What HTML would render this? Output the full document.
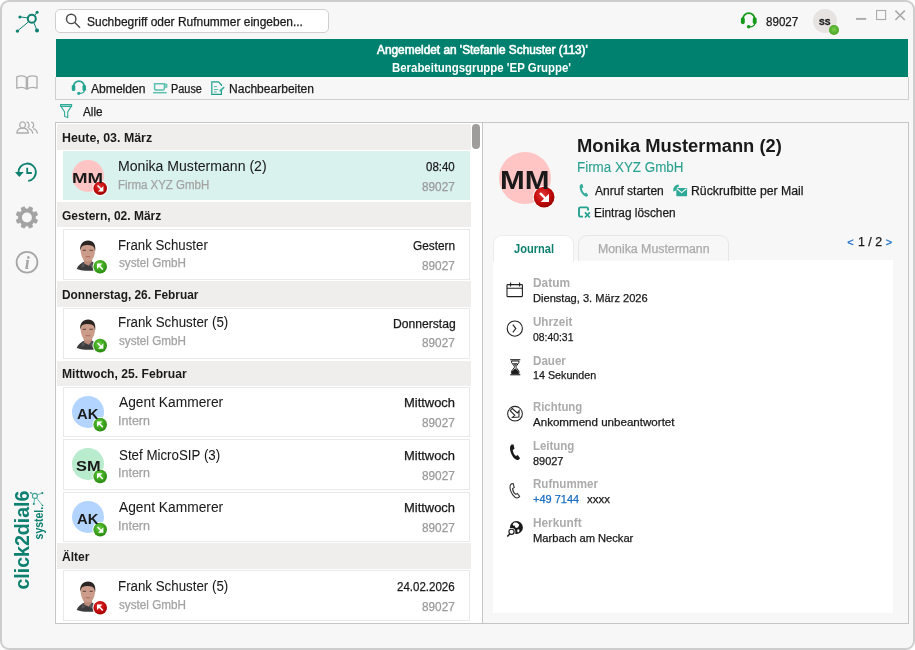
<!DOCTYPE html>
<html lang="de"><head><meta charset="utf-8"><title>click2dial6</title>
<style>
html,body{margin:0;padding:0;background:#fff;}
body{width:915px;height:650px;overflow:hidden;position:relative;font-family:"Liberation Sans", sans-serif;}
.t{position:absolute;white-space:pre;line-height:1.2;font-family:"Liberation Sans", sans-serif;}
.a{position:absolute;}
#root{position:absolute;left:0;top:0;width:915px;height:650px;will-change:transform;}

#win{position:absolute;left:0;top:0;width:911px;height:646px;border:2px solid #cdcdcd;border-radius:9px;background:#f7f7f7;}
.hd{position:absolute;left:57px;width:414px;height:25px;background:#f0eeed;}
.it{position:absolute;left:63px;width:405px;height:48px;background:#fff;border:1px solid #e9e9e9;}
.it.sel{background:#d9f2ee;border-color:#d9f2ee;}
.av{position:absolute;border-radius:50%;}
svg{position:absolute;overflow:visible;}

</style></head><body><div id="root">

<div id="win"></div>
<svg width="0" height="0" style="left:0;top:0"><defs>
<radialGradient id="gred" cx="42%" cy="38%" r="62%"><stop offset="0" stop-color="#e23a3a"/><stop offset="0.55" stop-color="#c90f0f"/><stop offset="1" stop-color="#9c0202"/></radialGradient>
<radialGradient id="ggreen" cx="42%" cy="38%" r="62%"><stop offset="0" stop-color="#6fd046"/><stop offset="0.55" stop-color="#3fa820"/><stop offset="1" stop-color="#2c8a12"/></radialGradient>
</defs></svg>
<div class="a" style="left:54.5px;top:9px;width:272.5px;height:21.5px;border:1px solid #cfcfcf;border-radius:5px;background:#fff"></div>
<div class="a" style="left:55px;top:77px;width:852px;height:22px;border:1px solid #cfcfcf;border-top:none;background:#f7f7f7"></div>
<div class="a" style="left:56px;top:39px;width:852px;height:38px;background:#00806f"></div>
<div class="a" style="left:55px;top:122px;width:426px;height:500px;border:1px solid #c6c6c6;background:#fff"></div>
<div class="a" style="left:472px;top:124px;width:8px;height:25px;border-radius:4px;background:#9e9d9b"></div>
<div class="a" style="left:482px;top:122px;width:425px;height:500px;border:1px solid #c6c6c6;background:#f7f7f7"></div>
<div class="a" style="left:493px;top:260px;width:400px;height:353px;background:#fff"></div>
<div class="a" style="left:493px;top:235px;width:79px;height:26px;border:1px solid #ececec;border-bottom:none;border-radius:9px 9px 0 0;background:#fff"></div>
<div class="a" style="left:578px;top:235px;width:149px;height:25px;border:1px solid #e6e6e6;border-bottom:none;border-radius:9px 9px 0 0;background:#f7f7f7"></div>
<div class="av" style="left:813px;top:8.8px;width:23.8px;height:23.8px;background:#e6e3e1"></div>
<div class="av" style="left:829px;top:24.75px;width:10.1px;height:10.1px;background:radial-gradient(circle at 50% 45%,#7ccc4e 0%,#55b02e 50%,#3d9a1e 100%)"></div>
<div class="hd" style="top:124.00px;height:26.00px"></div>
<div class="it sel" style="top:151.00px;height:47.00px"></div>
<div class="hd" style="top:202.00px;height:25.00px"></div>
<div class="it" style="top:229.00px;height:49.00px"></div>
<div class="hd" style="top:281.00px;height:26.00px"></div>
<div class="it" style="top:308.00px;height:49.00px"></div>
<div class="hd" style="top:361.00px;height:25.00px"></div>
<div class="it" style="top:387.00px;height:48.00px"></div>
<div class="it" style="top:439.00px;height:49.00px"></div>
<div class="it" style="top:492.00px;height:48.00px"></div>
<div class="hd" style="top:543.00px;height:26.00px"></div>
<div class="it" style="top:570.00px;height:49.00px"></div>
<div class="av" style="left:72.15px;top:160.10px;width:31.80px;height:31.80px;background:#ffc5c5"></div>
<svg style="left:91px;top:179px" width="18" height="18" viewBox="91 179 18 18">
<g transform="translate(100.20,188.20)"><circle r="7.70" fill="#fff"/><circle r="6.80" fill="url(#gred)"/>
<g transform="rotate(0) scale(0.971)" fill="#fff" stroke="none"><path d="M-3.3 -2.2 L-2.2 -3.3 L1.9 0.8 L0.8 1.9Z"/><path d="M3.3 3.3 H-2.3 L3.3 -2.3Z"/></g></g></svg>
<svg style="left:75px;top:240px" width="26" height="35" viewBox="75 240 26 35"><g transform="translate(87.70,240.20) scale(1,0.97)">
<path d="M-11 29.6 C-9.6 26 -7 24.4 -4.2 22.6 L4.6 22.2 C6.8 23.4 7.8 24.6 8 31 C2 32 -6 31.6 -11 29.6Z" fill="#3b3b3d"/>
<path d="M-4.4 18 H4.4 V22.4 L1 26.4 L-3.4 24.4Z" fill="#b98a78"/>
<path d="M-5 22.6 L-2.4 26.6 L-6.4 28.4 Z M4.6 22.2 L1.2 26.4 L5.4 28.6Z" fill="#55555a"/>
<path d="M-7.2 9 C-7.4 4 -4 1.6 0.2 1.6 C4.6 1.6 7.6 4.4 7.4 9.4 C7.4 14 6.4 17.6 4.2 20.2 C2.6 22.2 -1.6 22.6 -3.6 20.6 C-6 18.2 -7 14 -7.2 9Z" fill="#cc9c8a"/>
<path d="M-7.3 11 C-8.4 4 -4.6 0.2 0.4 0.2 C5.4 0.2 8.6 4 7.4 11.4 C7 8 6 6.4 4.4 5.6 C1.6 4.6 -2.4 4.8 -4.6 5.6 C-6.4 6.6 -7 8.4 -7.3 11Z" fill="#2b2523"/>
<path d="M-5 10.4 H-1.6 M1.8 10.4 H5.2" stroke="#5a3f38" stroke-width="1" fill="none"/>
<path d="M-2 17 H2.4" stroke="#a8655c" stroke-width="0.9" fill="none"/>
</g></svg>
<svg style="left:91px;top:258px" width="18" height="18" viewBox="91 258 18 18">
<g transform="translate(100.20,266.80)"><circle r="7.70" fill="#fff"/><circle r="6.80" fill="url(#ggreen)"/>
<g transform="rotate(180) scale(0.971)" fill="#fff" stroke="none"><path d="M-3.3 -2.2 L-2.2 -3.3 L1.9 0.8 L0.8 1.9Z"/><path d="M3.3 3.3 H-2.3 L3.3 -2.3Z"/></g></g></svg>
<svg style="left:75px;top:319px" width="26" height="35" viewBox="75 319 26 35"><g transform="translate(87.70,319.20) scale(1,0.97)">
<path d="M-11 29.6 C-9.6 26 -7 24.4 -4.2 22.6 L4.6 22.2 C6.8 23.4 7.8 24.6 8 31 C2 32 -6 31.6 -11 29.6Z" fill="#3b3b3d"/>
<path d="M-4.4 18 H4.4 V22.4 L1 26.4 L-3.4 24.4Z" fill="#b98a78"/>
<path d="M-5 22.6 L-2.4 26.6 L-6.4 28.4 Z M4.6 22.2 L1.2 26.4 L5.4 28.6Z" fill="#55555a"/>
<path d="M-7.2 9 C-7.4 4 -4 1.6 0.2 1.6 C4.6 1.6 7.6 4.4 7.4 9.4 C7.4 14 6.4 17.6 4.2 20.2 C2.6 22.2 -1.6 22.6 -3.6 20.6 C-6 18.2 -7 14 -7.2 9Z" fill="#cc9c8a"/>
<path d="M-7.3 11 C-8.4 4 -4.6 0.2 0.4 0.2 C5.4 0.2 8.6 4 7.4 11.4 C7 8 6 6.4 4.4 5.6 C1.6 4.6 -2.4 4.8 -4.6 5.6 C-6.4 6.6 -7 8.4 -7.3 11Z" fill="#2b2523"/>
<path d="M-5 10.4 H-1.6 M1.8 10.4 H5.2" stroke="#5a3f38" stroke-width="1" fill="none"/>
<path d="M-2 17 H2.4" stroke="#a8655c" stroke-width="0.9" fill="none"/>
</g></svg>
<svg style="left:91px;top:336px" width="18" height="19" viewBox="91 336 18 19">
<g transform="translate(100.20,345.60)"><circle r="7.70" fill="#fff"/><circle r="6.80" fill="url(#ggreen)"/>
<g transform="rotate(0) scale(0.971)" fill="#fff" stroke="none"><path d="M-3.3 -2.2 L-2.2 -3.3 L1.9 0.8 L0.8 1.9Z"/><path d="M3.3 3.3 H-2.3 L3.3 -2.3Z"/></g></g></svg>
<div class="av" style="left:72.15px;top:396.10px;width:31.80px;height:31.80px;background:#b3d4ff"></div>
<svg style="left:91px;top:415px" width="18" height="19" viewBox="91 415 18 19">
<g transform="translate(100.20,424.60)"><circle r="7.70" fill="#fff"/><circle r="6.80" fill="url(#ggreen)"/>
<g transform="rotate(180) scale(0.971)" fill="#fff" stroke="none"><path d="M-3.3 -2.2 L-2.2 -3.3 L1.9 0.8 L0.8 1.9Z"/><path d="M3.3 3.3 H-2.3 L3.3 -2.3Z"/></g></g></svg>
<div class="av" style="left:72.15px;top:448.10px;width:31.80px;height:31.80px;background:#b9ebcd"></div>
<svg style="left:91px;top:467px" width="18" height="19" viewBox="91 467 18 19">
<g transform="translate(100.20,476.40)"><circle r="7.70" fill="#fff"/><circle r="6.80" fill="url(#ggreen)"/>
<g transform="rotate(180) scale(0.971)" fill="#fff" stroke="none"><path d="M-3.3 -2.2 L-2.2 -3.3 L1.9 0.8 L0.8 1.9Z"/><path d="M3.3 3.3 H-2.3 L3.3 -2.3Z"/></g></g></svg>
<div class="av" style="left:72.15px;top:501.10px;width:31.80px;height:31.80px;background:#b3d4ff"></div>
<svg style="left:91px;top:520px" width="18" height="19" viewBox="91 520 18 19">
<g transform="translate(100.20,529.60)"><circle r="7.70" fill="#fff"/><circle r="6.80" fill="url(#ggreen)"/>
<g transform="rotate(0) scale(0.971)" fill="#fff" stroke="none"><path d="M-3.3 -2.2 L-2.2 -3.3 L1.9 0.8 L0.8 1.9Z"/><path d="M3.3 3.3 H-2.3 L3.3 -2.3Z"/></g></g></svg>
<svg style="left:75px;top:581px" width="26" height="35" viewBox="75 581 26 35"><g transform="translate(87.70,581.20) scale(1,0.97)">
<path d="M-11 29.6 C-9.6 26 -7 24.4 -4.2 22.6 L4.6 22.2 C6.8 23.4 7.8 24.6 8 31 C2 32 -6 31.6 -11 29.6Z" fill="#3b3b3d"/>
<path d="M-4.4 18 H4.4 V22.4 L1 26.4 L-3.4 24.4Z" fill="#b98a78"/>
<path d="M-5 22.6 L-2.4 26.6 L-6.4 28.4 Z M4.6 22.2 L1.2 26.4 L5.4 28.6Z" fill="#55555a"/>
<path d="M-7.2 9 C-7.4 4 -4 1.6 0.2 1.6 C4.6 1.6 7.6 4.4 7.4 9.4 C7.4 14 6.4 17.6 4.2 20.2 C2.6 22.2 -1.6 22.6 -3.6 20.6 C-6 18.2 -7 14 -7.2 9Z" fill="#cc9c8a"/>
<path d="M-7.3 11 C-8.4 4 -4.6 0.2 0.4 0.2 C5.4 0.2 8.6 4 7.4 11.4 C7 8 6 6.4 4.4 5.6 C1.6 4.6 -2.4 4.8 -4.6 5.6 C-6.4 6.6 -7 8.4 -7.3 11Z" fill="#2b2523"/>
<path d="M-5 10.4 H-1.6 M1.8 10.4 H5.2" stroke="#5a3f38" stroke-width="1" fill="none"/>
<path d="M-2 17 H2.4" stroke="#a8655c" stroke-width="0.9" fill="none"/>
</g></svg>
<svg style="left:91px;top:599px" width="18" height="18" viewBox="91 599 18 18">
<g transform="translate(100.20,607.80)"><circle r="7.70" fill="#fff"/><circle r="6.80" fill="url(#gred)"/>
<g transform="rotate(180) scale(0.971)" fill="#fff" stroke="none"><path d="M-3.3 -2.2 L-2.2 -3.3 L1.9 0.8 L0.8 1.9Z"/><path d="M3.3 3.3 H-2.3 L3.3 -2.3Z"/></g></g></svg>
<div class="av" style="left:498.8px;top:152.4px;width:51.8px;height:51.8px;background:#ffc5c5"></div>
<svg style="left:531px;top:184px" width="26" height="26" viewBox="531 184 26 26">
<g transform="translate(544.10,197.10)"><circle r="11.30" fill="#fff"/><circle r="10.40" fill="url(#gred)"/>
<g transform="rotate(0) scale(1.486)" fill="#fff" stroke="none"><path d="M-3.3 -2.2 L-2.2 -3.3 L1.9 0.8 L0.8 1.9Z"/><path d="M3.3 3.3 H-2.3 L3.3 -2.3Z"/></g></g></svg>

<!-- app logo -->
<svg style="left:14px;top:8px" width="28" height="28" viewBox="14 8 28 28" fill="none" stroke="#0e8070">
<circle cx="31.8" cy="18.7" r="4" stroke-width="2"/>
<path d="M34.8 15.4 L37 12.3 M27.6 17.9 L20 16.9 M28.3 22 L17.5 31 M33.8 22.6 L37 30.4" stroke-width="1"/>
<g fill="#0e8070" stroke="none"><circle cx="37.1" cy="12.2" r="1.5"/><circle cx="19.9" cy="16.9" r="1.5"/><circle cx="17.4" cy="31.1" r="1.7"/><circle cx="37" cy="30.5" r="2"/></g>
</svg>
<!-- search magnifier -->
<svg style="left:65px;top:13px" width="16" height="16" viewBox="0 0 16 16" fill="none" stroke="#4a4a4a" stroke-width="1.45"><circle cx="6.2" cy="5.9" r="4.7"/><path d="M9.6 9.3 L15 14.7"/></svg>
<!-- top headset (green) -->
<svg style="left:740px;top:12px" width="18" height="18" viewBox="740 12 18 18"><g transform="translate(740.9,12.6) scale(1.11)" fill="none" stroke="#14991a"><path d="M1.8 5.8 A5.3 5.3 0 0 1 12.4 5.8" stroke-width="1.7"/><rect x="0" y="4.1" width="3.5" height="6.3" rx="1.6" fill="#14991a" stroke="none"/><rect x="10.7" y="4.1" width="3.5" height="6.3" rx="1.6" fill="#14991a" stroke="none"/><path d="M12.6 9.6 C12.4 11.8 9.8 12.8 7.6 12.8" stroke-width="1.2"/><circle cx="7" cy="12.7" r="1.6" fill="#14991a" stroke="none"/></g></svg>
<!-- window controls -->
<svg style="left:855px;top:8px" width="52" height="14" viewBox="855 8 52 14" fill="none" stroke="#ababab"><path d="M856 18.9 H866.2" stroke-width="1.9"/><rect x="876.6" y="10.5" width="9" height="9" stroke-width="1.1"/><path d="M895.4 10.6 L904.8 20 M904.8 10.6 L895.4 20" stroke-width="1.7"/></svg>
<!-- toolbar: headset -->
<svg style="left:71px;top:80px" width="16" height="16" viewBox="71 80 16 16"><g transform="translate(71.8,80.6) scale(1.0)" fill="none" stroke="#27a593"><path d="M1.8 5.8 A5.3 5.3 0 0 1 12.4 5.8" stroke-width="1.7"/><rect x="0" y="4.1" width="3.5" height="6.3" rx="1.6" fill="#27a593" stroke="none"/><rect x="10.7" y="4.1" width="3.5" height="6.3" rx="1.6" fill="#27a593" stroke="none"/><path d="M12.6 9.6 C12.4 11.8 9.8 12.8 7.6 12.8" stroke-width="1.2"/><circle cx="7" cy="12.7" r="1.6" fill="#27a593" stroke="none"/></g></svg>
<!-- toolbar: cup -->
<svg style="left:153px;top:83px" width="15" height="11" viewBox="0 0 15 11" fill="none" stroke="#5cc0b0" stroke-width="1.5"><path d="M1.6 0.8 H11.4 V5.6 Q11.4 7 10 7 H3 Q1.6 7 1.6 5.6Z"/><path d="M11.4 1.6 H13.6 V4 H11.4"/><path d="M0 9.7 H13.6"/></svg>
<!-- toolbar: doc -->
<svg style="left:211px;top:81px" width="14" height="15" viewBox="0 0 14 15" fill="none" stroke="#1aa08c" stroke-width="1.2"><path d="M10.4 8.6 V13.4 H0.8 V0.8 H7.4 L10.4 3.8 V5"/><path d="M3 5.6 H6 M3 8.6 H7.2 M3 11 H5.8" stroke-width="1" stroke="#4db8a7"/><path d="M8.7 10.2 L13.2 6.1" stroke-width="1.8" stroke="#3fb3a1"/></svg>
<!-- funnel -->
<svg style="left:60px;top:104px" width="13" height="15" viewBox="60 104 13 15" fill="none" stroke="#2fab98" stroke-width="1.1" stroke-linejoin="miter"><path d="M60.6 104.6 H71.6 V106.4 H60.6Z"/><path d="M61 106.4 L64.6 111.9 V116.4 L67.7 117.5 V111.9 L71.2 106.4"/></svg>
<!-- sidebar: book -->
<svg style="left:15px;top:74px" width="24" height="17" viewBox="15 74 24 17" fill="none" stroke="#adadad" stroke-width="1.3" stroke-linejoin="round"><path d="M26.3 77.4 C24.4 75.6 20.2 75.2 16.8 76.8 V88.2 C20.2 87.2 24.4 87.4 26.3 89 Z"/><path d="M27.5 77.4 C29.4 75.6 33.6 75.2 37 76.8 V88.2 C33.6 87.2 29.4 87.4 27.5 89 Z"/></svg>
<!-- sidebar: people -->
<svg style="left:15px;top:120px" width="24" height="15" viewBox="15 120 24 15" fill="none" stroke="#adadad" stroke-width="1.3" stroke-linejoin="round"><path d="M22.6 121.9 a2.9 3.1 0 1 0 0.01 0Z"/><path d="M16.8 133 C17.2 129.6 19.4 128.2 22.6 128.2 C25.8 128.2 28 129.6 28.4 133 Z"/><path d="M26.6 122 A2.9 3.1 0 0 1 27.6 127.8 M28.6 128.6 C30.8 129.2 32.4 130.4 32.8 133.6"/><path d="M31.2 122 A2.9 3.1 0 0 1 32.2 127.8 M33.2 128.6 C35.4 129.2 37 130.4 37.4 133.6"/></svg>
<!-- sidebar: history -->
<svg style="left:14px;top:161px" width="26" height="24" viewBox="14 161 26 24" fill="none" stroke="#0e8070" stroke-width="1.9"><path d="M18.5 172.6 A8.7 8.7 0 1 1 28.2 180.9"/><path d="M15 172 L23.7 172 L19.3 176.9 Z" fill="#0e8070" stroke="none"/><path d="M27.2 167.8 V173 H31.8" stroke-width="1.8"/></svg>
<!-- sidebar: gear -->
<svg style="left:15px;top:206px" width="24" height="24" viewBox="-11.9 -11.45 24 24"><path transform="rotate(22.5) scale(0.98)" d="M-2.09 -8.34 L-1.75 -11.06 L1.75 -11.06 L2.09 -8.34 L4.42 -7.38 L6.58 -9.06 L9.06 -6.58 L7.38 -4.42 L8.34 -2.09 L11.06 -1.75 L11.06 1.75 L8.34 2.09 L7.38 4.42 L9.06 6.58 L6.58 9.06 L4.42 7.38 L2.09 8.34 L1.75 11.06 L-1.75 11.06 L-2.09 8.34 L-4.42 7.38 L-6.58 9.06 L-9.06 6.58 L-7.38 4.42 L-8.34 2.09 L-11.06 1.75 L-11.06 -1.75 L-8.34 -2.09 L-7.38 -4.42 L-9.06 -6.58 L-6.58 -9.06 L-4.42 -7.38Z" fill="#a3a3a3" stroke="#a3a3a3" stroke-width="0.8" stroke-linejoin="round"/><circle r="5" fill="#f7f7f7"/></svg>
<!-- sidebar: info -->
<svg style="left:15px;top:250px" width="24" height="24" viewBox="15 250 24 24" fill="none" stroke="#a6a6a6" stroke-width="1.8"><circle cx="27" cy="262.2" r="10.4"/><text x="27.3" y="268.6" font-family="Liberation Serif, serif" font-style="italic" font-weight="700" font-size="18" fill="#a6a6a6" stroke="none" text-anchor="middle">i</text></svg>
<!-- detail: phone (call start) -->
<svg style="left:578px;top:183px" width="12" height="16" viewBox="578 183 12 16"><path transform="translate(577.78,183.47) scale(0.9,0.875)" d="M3.4 0.8 L5.2 0.6 L6.2 4.6 L4.6 5.6 C4.8 8 6 10.2 7.8 11.4 L9.4 10.4 L11.6 13.4 L10.4 14.8 C9 15.6 6.6 14.6 4.6 11.6 C2.4 8.4 1.8 4.6 2.2 2.4 Z" fill="#36ae9b"/></svg>
<!-- detail: mail -->
<svg style="left:672px;top:183px" width="17" height="15" viewBox="672 183 17 15"><path d="M673.2 191.4 C673 187.4 675.4 184.6 678.4 184.4 L679.2 186.6 C677 187 676 188.6 676 190.6 Z" fill="#2fa997"/><rect x="676.3" y="187.9" width="10.8" height="8.4" rx="0.7" fill="#2fa997"/><path d="M677 188.8 L681.7 192.6 L686.4 188.8" fill="none" stroke="#f7f7f7" stroke-width="1.1"/></svg>
<!-- detail: delete entry -->
<svg style="left:577px;top:205px" width="15" height="14" viewBox="577 205 15 14" fill="none" stroke="#25a18f"><path d="M588 210.6 V208.8 Q588 207.4 586.6 207.4 H580.4 Q579 207.4 579 208.8 V215.2 Q579 216.6 580.4 216.6 H583" stroke-width="1.9"/><path d="M585 212.3 L589.8 217.5 M589.8 212.3 L585 217.5" stroke-width="1.7"/></svg>
<!-- field: calendar -->
<svg style="left:506px;top:282px" width="18" height="16" viewBox="0 0 18 16" fill="none" stroke="#222" stroke-width="1.1"><rect x="1" y="2.6" width="15.4" height="12" rx="0.6"/><path d="M1 6.2 H16.4 M4.6 0.4 V4.4 M13.6 0.4 V4.4"/></svg>
<!-- field: clock -->
<svg style="left:506px;top:320px" width="18" height="18" viewBox="0 0 18 18" fill="none" stroke="#222" stroke-width="1.1"><circle cx="8.8" cy="8.6" r="7.6"/><path d="M6.8 4.6 L9.8 8.6 L6.8 12.4"/></svg>
<!-- field: hourglass -->
<svg style="left:509px;top:358px" width="13" height="18" viewBox="509 358 13 18" fill="#1a1a1a"><rect x="510.2" y="359.2" width="10.1" height="1.1"/><rect x="510.2" y="374.2" width="10.1" height="1.1"/><path d="M511.6 361 H518.9 V362.6 L516.1 366.4 V367.4 L518.9 371.2 V373.6 H511.6 V371.2 L514.4 367.4 V366.4 L511.6 362.6 Z" fill="none" stroke="#1a1a1a" stroke-width="1"/><path d="M512.6 363 H517.9 L515.25 366.4Z" fill="#555"/><path d="M515.25 368.2 L518.6 371.6 V373.6 H511.9 V371.6Z"/></svg>
<!-- field: direction -->
<svg style="left:506px;top:405px" width="18" height="18" viewBox="506 405 18 18" fill="none" stroke="#222" stroke-width="1.05" stroke-linejoin="miter"><circle cx="515" cy="413.7" r="7.35"/><path d="M512.2 408.5 L517.3 413 L519.1 410.6 L518.9 417.1 L512.4 417.4 L514.8 415.3 L510.2 410.7 Z"/></svg>
<!-- field: phone filled -->
<svg style="left:508px;top:443.6px" width="13" height="18" viewBox="0 0 13.6 18.8"><path d="M3.6 0.6 L5.8 0.4 L6.8 5 L5 6.2 C5.2 8.8 6.4 11.2 8.4 12.6 L10.2 11.4 L12.6 14.8 L11.2 16.4 C9.6 17.4 7 16.2 4.8 12.8 C2.4 9.2 1.8 5 2.2 2.6 Z" fill="#1a1a1a"/></svg>
<!-- field: phone outline -->
<svg style="left:507.8px;top:482.6px" width="13" height="16" viewBox="0 0 13 16"><path d="M3.4 0.8 L5.2 0.6 L6.2 4.6 L4.6 5.6 C4.8 8 6 10.2 7.8 11.4 L9.4 10.4 L11.6 13.4 L10.4 14.6 C9 15.4 6.6 14.4 4.6 11.6 C2.4 8.4 1.8 4.6 2.2 2.4 Z" fill="none" stroke="#333" stroke-width="1.1"/></svg>
<!-- field: origin (globe with magnifier) -->
<svg style="left:506px;top:520px" width="18" height="18" viewBox="506 520 18 18"><circle cx="516.4" cy="527.5" r="6.5" fill="#1a1a1a"/><path d="M512.6 524.2 L514.2 522.4 L516.8 522.6 L519.2 524.4 L518.6 526.6 L517 528 L515.4 527.4 L514.6 525.6 L513.4 525.8Z M517.4 529.4 L519.2 529.2 L519.4 531.4 L518 532.6 L517.2 531.2Z" fill="#fff"/><circle cx="511.5" cy="531.8" r="3.9" fill="#fff"/><circle cx="511.5" cy="531.8" r="2.6" fill="#fff" stroke="#1a1a1a" stroke-width="1.15"/><path d="M509.7 533.9 L507.3 536.4" stroke="#1a1a1a" stroke-width="1.5"/></svg>


<svg style="left:28px;top:489px" width="18" height="19" viewBox="28 489 18 19" fill="none" stroke="#3aa595" stroke-width="0.8"><circle cx="34.9" cy="495.9" r="2.5" stroke-width="1.1"/><path d="M37.2 494.9 L42.3 493.1 M36.6 498 L42.5 505.5 M34.6 498.6 L33.8 504 M32.9 494.4 L30.8 492.8"/><g fill="#0e8070" stroke="none"><circle cx="42.3" cy="493.1" r="1"/><circle cx="42.5" cy="505.5" r="0.8"/><circle cx="33.8" cy="504" r="0.9"/><circle cx="30.8" cy="492.8" r="0.8"/></g></svg>


<span class="t" id="t0" style="left:86.63px;top:14.80px;font-size:12px;font-weight:400;color:#1a1a1a;letter-spacing:0.000px;-webkit-text-stroke:0.25px currentColor;transform:scaleX(0.9971);transform-origin:0 0;">Suchbegriff oder Rufnummer eingeben...</span>
<span class="t" id="t1" style="left:765.64px;top:14.80px;font-size:12px;font-weight:400;color:#1a1a1a;letter-spacing:0.000px;-webkit-text-stroke:0.25px currentColor;transform:scaleX(0.9659);transform-origin:0 0;">89027</span>
<span class="t" id="t2" style="left:819.47px;top:15.80px;font-size:9.6px;font-weight:700;color:#1a1a1a;letter-spacing:0.000px;-webkit-text-stroke:0.35px currentColor;transform:scaleX(0.8949);transform-origin:0 0;">SS</span>
<span class="t" id="t3" style="left:377.00px;top:42.50px;font-size:12px;font-weight:400;color:#fff;letter-spacing:0.000px;-webkit-text-stroke:0.6px currentColor;transform:scaleX(0.9859);transform-origin:0 0;">Angemeldet an 'Stefanie Schuster (113)'</span>
<span class="t" id="t4" style="left:392.29px;top:61.20px;font-size:12px;font-weight:700;color:#fff;letter-spacing:0.000px;transform:scaleX(0.9517);transform-origin:0 0;">Berabeitungsgruppe 'EP Gruppe'</span>
<span class="t" id="t5" style="left:90.50px;top:82.00px;font-size:12px;font-weight:400;color:#1a1a1a;letter-spacing:0.000px;-webkit-text-stroke:0.25px currentColor;transform:scaleX(1.0082);transform-origin:0 0;">Abmelden</span>
<span class="t" id="t6" style="left:171.15px;top:82.00px;font-size:12px;font-weight:400;color:#1a1a1a;letter-spacing:0.000px;-webkit-text-stroke:0.25px currentColor;transform:scaleX(0.9079);transform-origin:0 0;">Pause</span>
<span class="t" id="t7" style="left:228.86px;top:82.00px;font-size:12px;font-weight:400;color:#1a1a1a;letter-spacing:0.000px;-webkit-text-stroke:0.25px currentColor;transform:scaleX(1.0034);transform-origin:0 0;">Nachbearbeiten</span>
<span class="t" id="t8" style="left:83.30px;top:104.60px;font-size:12px;font-weight:400;color:#1a1a1a;letter-spacing:0.000px;-webkit-text-stroke:0.25px currentColor;transform:scaleX(0.9783);transform-origin:0 0;">Alle</span>
<span class="t" id="t9" style="left:61.73px;top:130.70px;font-size:12px;font-weight:700;color:#1a1a1a;letter-spacing:0.000px;transform:scaleX(1.0309);transform-origin:0 0;">Heute, 03. März</span>
<span class="t" id="t10" style="left:118.40px;top:158.00px;font-size:14px;font-weight:400;color:#1a1a1a;letter-spacing:0.000px;-webkit-text-stroke:0.05px currentColor;transform:scaleX(1.0054);transform-origin:0 0;">Monika Mustermann (2)</span>
<span class="t" id="t11" style="left:118.30px;top:178.00px;font-size:12px;font-weight:400;color:#a3a3a3;letter-spacing:0.000px;-webkit-text-stroke:0.25px currentColor;transform:scaleX(0.9569);transform-origin:0 0;">Firma XYZ GmbH</span>
<span class="t" id="t12" style="left:425.94px;top:160.20px;font-size:12px;font-weight:400;color:#1a1a1a;letter-spacing:0.000px;-webkit-text-stroke:0.25px currentColor;transform:scaleX(0.9572);transform-origin:0 0;">08:40</span>
<span class="t" id="t13" style="left:422.13px;top:179.90px;font-size:12px;font-weight:400;color:#9a9a9a;letter-spacing:0.000px;-webkit-text-stroke:0.25px currentColor;transform:scaleX(0.9813);transform-origin:0 0;">89027</span>
<span class="t" id="t14" style="left:62.13px;top:208.70px;font-size:12px;font-weight:700;color:#1a1a1a;letter-spacing:0.000px;transform:scaleX(0.9987);transform-origin:0 0;">Gestern, 02. März</span>
<span class="t" id="t15" style="left:118.47px;top:237.00px;font-size:14px;font-weight:400;color:#1a1a1a;letter-spacing:0.000px;-webkit-text-stroke:0.05px currentColor;transform:scaleX(0.9460);transform-origin:0 0;">Frank Schuster</span>
<span class="t" id="t16" style="left:118.52px;top:256.40px;font-size:12px;font-weight:400;color:#a3a3a3;letter-spacing:0.000px;-webkit-text-stroke:0.25px currentColor;transform:scaleX(0.9761);transform-origin:0 0;">systel GmbH</span>
<span class="t" id="t17" style="left:413.35px;top:239.20px;font-size:12px;font-weight:400;color:#1a1a1a;letter-spacing:0.000px;-webkit-text-stroke:0.25px currentColor;transform:scaleX(0.9843);transform-origin:0 0;">Gestern</span>
<span class="t" id="t18" style="left:422.13px;top:258.90px;font-size:12px;font-weight:400;color:#9a9a9a;letter-spacing:0.000px;-webkit-text-stroke:0.25px currentColor;transform:scaleX(0.9813);transform-origin:0 0;">89027</span>
<span class="t" id="t19" style="left:61.76px;top:287.70px;font-size:12px;font-weight:700;color:#1a1a1a;letter-spacing:0.000px;transform:scaleX(0.9882);transform-origin:0 0;">Donnerstag, 26. Februar</span>
<span class="t" id="t20" style="left:118.46px;top:314.30px;font-size:14px;font-weight:400;color:#1a1a1a;letter-spacing:0.000px;-webkit-text-stroke:0.05px currentColor;transform:scaleX(0.9509);transform-origin:0 0;">Frank Schuster (5)</span>
<span class="t" id="t21" style="left:118.52px;top:334.20px;font-size:12px;font-weight:400;color:#a3a3a3;letter-spacing:0.000px;-webkit-text-stroke:0.25px currentColor;transform:scaleX(0.9761);transform-origin:0 0;">systel GmbH</span>
<span class="t" id="t22" style="left:392.65px;top:316.50px;font-size:12px;font-weight:400;color:#1a1a1a;letter-spacing:0.000px;-webkit-text-stroke:0.25px currentColor;transform:scaleX(1.0111);transform-origin:0 0;">Donnerstag</span>
<span class="t" id="t23" style="left:422.13px;top:336.20px;font-size:12px;font-weight:400;color:#9a9a9a;letter-spacing:0.000px;-webkit-text-stroke:0.25px currentColor;transform:scaleX(0.9813);transform-origin:0 0;">89027</span>
<span class="t" id="t24" style="left:61.74px;top:367.00px;font-size:12px;font-weight:700;color:#1a1a1a;letter-spacing:0.000px;transform:scaleX(1.0104);transform-origin:0 0;">Mittwoch, 25. Februar</span>
<span class="t" id="t25" style="left:118.90px;top:393.60px;font-size:14px;font-weight:400;color:#1a1a1a;letter-spacing:0.000px;-webkit-text-stroke:0.05px currentColor;transform:scaleX(0.9844);transform-origin:0 0;">Agent Kammerer</span>
<span class="t" id="t26" style="left:118.02px;top:413.60px;font-size:12px;font-weight:400;color:#a3a3a3;letter-spacing:0.000px;-webkit-text-stroke:0.25px currentColor;transform:scaleX(1.0422);transform-origin:0 0;">Intern</span>
<span class="t" id="t27" style="left:404.39px;top:395.80px;font-size:12px;font-weight:400;color:#1a1a1a;letter-spacing:0.000px;-webkit-text-stroke:0.25px currentColor;transform:scaleX(1.0780);transform-origin:0 0;">Mittwoch</span>
<span class="t" id="t28" style="left:422.13px;top:415.50px;font-size:12px;font-weight:400;color:#9a9a9a;letter-spacing:0.000px;-webkit-text-stroke:0.25px currentColor;transform:scaleX(0.9813);transform-origin:0 0;">89027</span>
<span class="t" id="t29" style="left:118.78px;top:446.60px;font-size:14px;font-weight:400;color:#1a1a1a;letter-spacing:0.000px;-webkit-text-stroke:0.05px currentColor;transform:scaleX(0.9515);transform-origin:0 0;">Stef MicroSIP (3)</span>
<span class="t" id="t30" style="left:118.02px;top:466.20px;font-size:12px;font-weight:400;color:#a3a3a3;letter-spacing:0.000px;-webkit-text-stroke:0.25px currentColor;transform:scaleX(1.0422);transform-origin:0 0;">Intern</span>
<span class="t" id="t31" style="left:404.39px;top:448.80px;font-size:12px;font-weight:400;color:#1a1a1a;letter-spacing:0.000px;-webkit-text-stroke:0.25px currentColor;transform:scaleX(1.0780);transform-origin:0 0;">Mittwoch</span>
<span class="t" id="t32" style="left:422.13px;top:468.50px;font-size:12px;font-weight:400;color:#9a9a9a;letter-spacing:0.000px;-webkit-text-stroke:0.25px currentColor;transform:scaleX(0.9813);transform-origin:0 0;">89027</span>
<span class="t" id="t33" style="left:118.90px;top:498.80px;font-size:14px;font-weight:400;color:#1a1a1a;letter-spacing:0.000px;-webkit-text-stroke:0.05px currentColor;transform:scaleX(0.9844);transform-origin:0 0;">Agent Kammerer</span>
<span class="t" id="t34" style="left:118.02px;top:518.80px;font-size:12px;font-weight:400;color:#a3a3a3;letter-spacing:0.000px;-webkit-text-stroke:0.25px currentColor;transform:scaleX(1.0422);transform-origin:0 0;">Intern</span>
<span class="t" id="t35" style="left:404.39px;top:501.00px;font-size:12px;font-weight:400;color:#1a1a1a;letter-spacing:0.000px;-webkit-text-stroke:0.25px currentColor;transform:scaleX(1.0780);transform-origin:0 0;">Mittwoch</span>
<span class="t" id="t36" style="left:422.13px;top:520.70px;font-size:12px;font-weight:400;color:#9a9a9a;letter-spacing:0.000px;-webkit-text-stroke:0.25px currentColor;transform:scaleX(0.9813);transform-origin:0 0;">89027</span>
<span class="t" id="t37" style="left:62.31px;top:549.80px;font-size:12px;font-weight:700;color:#1a1a1a;letter-spacing:0.000px;transform:scaleX(1.0044);transform-origin:0 0;">Älter</span>
<span class="t" id="t38" style="left:118.46px;top:577.80px;font-size:14px;font-weight:400;color:#1a1a1a;letter-spacing:0.000px;-webkit-text-stroke:0.05px currentColor;transform:scaleX(0.9509);transform-origin:0 0;">Frank Schuster (5)</span>
<span class="t" id="t39" style="left:118.52px;top:597.50px;font-size:12px;font-weight:400;color:#a3a3a3;letter-spacing:0.000px;-webkit-text-stroke:0.25px currentColor;transform:scaleX(0.9761);transform-origin:0 0;">systel GmbH</span>
<span class="t" id="t40" style="left:397.26px;top:580.00px;font-size:12px;font-weight:400;color:#1a1a1a;letter-spacing:0.000px;-webkit-text-stroke:0.25px currentColor;transform:scaleX(0.9592);transform-origin:0 0;">24.02.2026</span>
<span class="t" id="t41" style="left:422.13px;top:599.70px;font-size:12px;font-weight:400;color:#9a9a9a;letter-spacing:0.000px;-webkit-text-stroke:0.25px currentColor;transform:scaleX(0.9813);transform-origin:0 0;">89027</span>
<span class="t" id="t42" style="left:72.43px;top:169.80px;font-size:14.7px;font-weight:700;color:#1a1a1a;letter-spacing:0.000px;transform:scaleX(1.2713);transform-origin:0 0;">MM</span>
<span class="t" id="t43" style="left:77.47px;top:405.80px;font-size:14.7px;font-weight:700;color:#1a1a1a;letter-spacing:0.000px;transform:scaleX(1.0118);transform-origin:0 0;">AK</span>
<span class="t" id="t44" style="left:76.14px;top:457.80px;font-size:14.7px;font-weight:700;color:#1a1a1a;letter-spacing:0.000px;transform:scaleX(1.1111);transform-origin:0 0;">SM</span>
<span class="t" id="t45" style="left:77.47px;top:510.80px;font-size:14.7px;font-weight:700;color:#1a1a1a;letter-spacing:0.000px;transform:scaleX(1.0118);transform-origin:0 0;">AK</span>
<span class="t" id="t46" style="left:500.14px;top:164.70px;font-size:25px;font-weight:700;color:#1a1a1a;letter-spacing:0.000px;transform:scaleX(1.1883);transform-origin:0 0;">MM</span>
<span class="t" id="t47" style="left:577.25px;top:136.00px;font-size:17.6px;font-weight:700;color:#1a1a1a;letter-spacing:0.000px;transform:scaleX(1.0425);transform-origin:0 0;">Monika Mustermann (2)</span>
<span class="t" id="t48" style="left:577.35px;top:159.00px;font-size:14px;font-weight:400;color:#2aa190;letter-spacing:0.000px;-webkit-text-stroke:0.1px currentColor;transform:scaleX(0.9569);transform-origin:0 0;">Firma XYZ GmbH</span>
<span class="t" id="t49" style="left:595.40px;top:183.70px;font-size:12px;font-weight:400;color:#1a1a1a;letter-spacing:0.000px;-webkit-text-stroke:0.25px currentColor;transform:scaleX(1.0011);transform-origin:0 0;">Anruf starten</span>
<span class="t" id="t50" style="left:690.64px;top:183.70px;font-size:12px;font-weight:400;color:#1a1a1a;letter-spacing:0.000px;-webkit-text-stroke:0.25px currentColor;transform:scaleX(1.0230);transform-origin:0 0;">Rückrufbitte per Mail</span>
<span class="t" id="t51" style="left:594.48px;top:206.00px;font-size:12px;font-weight:400;color:#1a1a1a;letter-spacing:0.000px;-webkit-text-stroke:0.25px currentColor;transform:scaleX(0.9864);transform-origin:0 0;">Eintrag löschen</span>
<span class="t" id="t52" style="left:513.80px;top:242.10px;font-size:12px;font-weight:700;color:#0e8070;letter-spacing:0.000px;transform:scaleX(0.9242);transform-origin:0 0;">Journal</span>
<span class="t" id="t53" style="left:597.64px;top:242.10px;font-size:12px;font-weight:400;color:#aaaaaa;letter-spacing:0.000px;-webkit-text-stroke:0.25px currentColor;transform:scaleX(1.0262);transform-origin:0 0;">Monika Mustermann</span>
<span class="t" id="t54" style="left:847.20px;top:235.60px;font-size:11px;font-weight:400;color:#1b6ec2;letter-spacing:0.000px;-webkit-text-stroke:0.25px currentColor;">&lt;</span>
<span class="t" id="t55" style="left:857.83px;top:234.80px;font-size:12px;font-weight:400;color:#1a1a1a;letter-spacing:0.000px;-webkit-text-stroke:0.25px currentColor;transform:scaleX(1.0311);transform-origin:0 0;">1 / 2</span>
<span class="t" id="t56" style="left:885.76px;top:235.60px;font-size:11px;font-weight:400;color:#1b6ec2;letter-spacing:0.000px;-webkit-text-stroke:0.25px currentColor;">&gt;</span>
<span class="t" id="t57" style="left:532.76px;top:276.00px;font-size:12px;font-weight:700;color:#ababab;letter-spacing:0.000px;transform:scaleX(0.9901);transform-origin:0 0;">Datum</span>
<span class="t" id="t58" style="left:532.63px;top:292.00px;font-size:10.7px;font-weight:400;color:#1a1a1a;letter-spacing:0.000px;-webkit-text-stroke:0.25px currentColor;transform:scaleX(1.0379);transform-origin:0 0;">Dienstag, 3. März 2026</span>
<span class="t" id="t59" style="left:532.96px;top:315.00px;font-size:12px;font-weight:700;color:#ababab;letter-spacing:0.000px;transform:scaleX(0.9663);transform-origin:0 0;">Uhrzeit</span>
<span class="t" id="t60" style="left:533.18px;top:331.00px;font-size:10.7px;font-weight:400;color:#1a1a1a;letter-spacing:0.000px;-webkit-text-stroke:0.25px currentColor;transform:scaleX(0.9711);transform-origin:0 0;">08:40:31</span>
<span class="t" id="t61" style="left:532.77px;top:354.00px;font-size:12px;font-weight:700;color:#ababab;letter-spacing:0.000px;transform:scaleX(0.9669);transform-origin:0 0;">Dauer</span>
<span class="t" id="t62" style="left:532.83px;top:369.00px;font-size:10.7px;font-weight:400;color:#1a1a1a;letter-spacing:0.000px;-webkit-text-stroke:0.25px currentColor;transform:scaleX(1.0033);transform-origin:0 0;">14 Sekunden</span>
<span class="t" id="t63" style="left:532.79px;top:400.00px;font-size:12px;font-weight:700;color:#ababab;letter-spacing:0.000px;transform:scaleX(0.9470);transform-origin:0 0;">Richtung</span>
<span class="t" id="t64" style="left:533.00px;top:416.00px;font-size:10.7px;font-weight:400;color:#1a1a1a;letter-spacing:0.000px;-webkit-text-stroke:0.25px currentColor;transform:scaleX(1.0826);transform-origin:0 0;">Ankommend unbeantwortet</span>
<span class="t" id="t65" style="left:532.78px;top:439.00px;font-size:12px;font-weight:700;color:#ababab;letter-spacing:0.000px;transform:scaleX(0.9544);transform-origin:0 0;">Leitung</span>
<span class="t" id="t66" style="left:533.16px;top:455.00px;font-size:10.7px;font-weight:400;color:#1a1a1a;letter-spacing:0.000px;-webkit-text-stroke:0.25px currentColor;transform:scaleX(1.0246);transform-origin:0 0;">89027</span>
<span class="t" id="t67" style="left:532.78px;top:476.80px;font-size:12px;font-weight:700;color:#ababab;letter-spacing:0.000px;transform:scaleX(0.9636);transform-origin:0 0;">Rufnummer</span>
<span class="t" id="t68" style="left:532.98px;top:492.50px;font-size:10.7px;font-weight:400;color:#1b6ec2;letter-spacing:0.000px;-webkit-text-stroke:0.25px currentColor;transform:scaleX(1.0304);transform-origin:0 0;">+49 7144</span>
<span class="t" id="t69" style="left:587.30px;top:492.50px;font-size:10.7px;font-weight:400;color:#1a1a1a;letter-spacing:0.000px;-webkit-text-stroke:0.25px currentColor;transform:scaleX(1.0748);transform-origin:0 0;">xxxx</span>
<span class="t" id="t70" style="left:532.76px;top:516.00px;font-size:12px;font-weight:700;color:#ababab;letter-spacing:0.000px;transform:scaleX(0.9850);transform-origin:0 0;">Herkunft</span>
<span class="t" id="t71" style="left:532.63px;top:532.00px;font-size:10.7px;font-weight:400;color:#1a1a1a;letter-spacing:0.000px;-webkit-text-stroke:0.25px currentColor;transform:scaleX(1.0425);transform-origin:0 0;">Marbach am Neckar</span>
<span class="t" id="t72" style="left:0;top:0;transform-origin:0 0;transform:translate(29.1px,589.6px) rotate(-90deg) translate(0px,-20.00px) scaleX(0.9318);font-size:21px;font-weight:700;color:#0e8070;">click2dial6</span>
<span class="t" id="t73" style="left:0;top:0;transform-origin:0 0;transform:translate(43.3px,539.4px) rotate(-90deg) translate(0px,-11.00px) scaleX(0.8512);font-size:12.3px;font-weight:700;color:#0e8070;">systel.</span>
</div></body></html>
